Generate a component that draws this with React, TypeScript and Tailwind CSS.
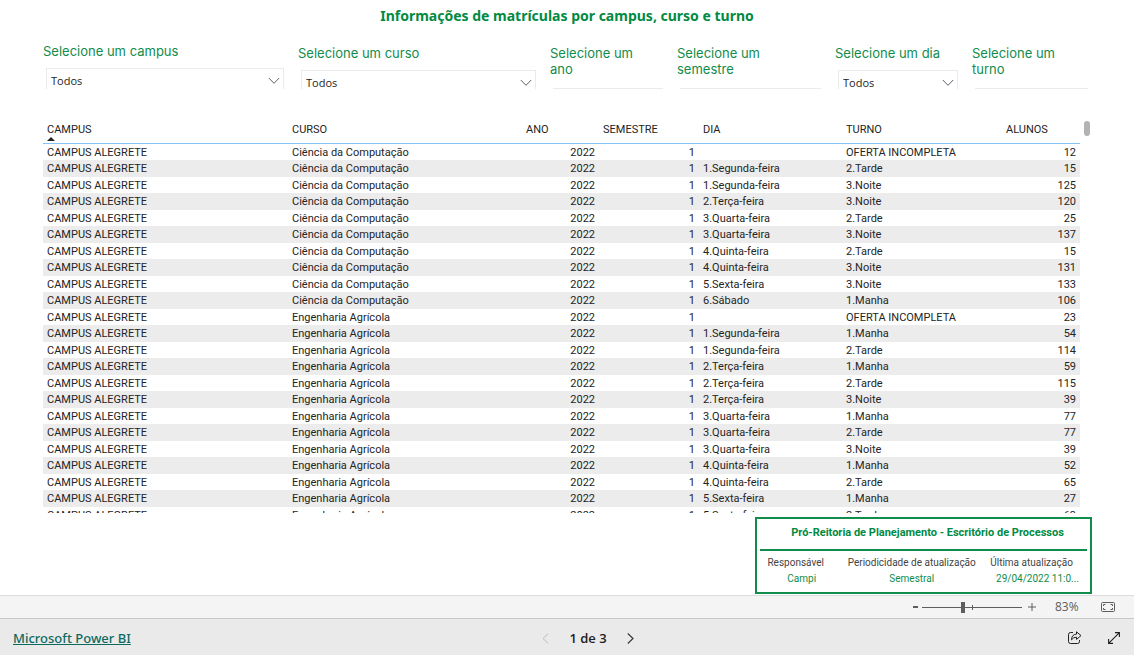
import React from 'react';

interface Slicer {
  id: string;
  label: string;
  raised?: boolean;
  collapsed?: boolean;
}

const slicers: Slicer[] = [
  { id: 'campus', label: 'Selecione um campus', raised: true },
  { id: 'curso', label: 'Selecione um curso' },
  { id: 'ano', label: 'Selecione um ano', collapsed: true },
  { id: 'semestre', label: 'Selecione um semestre', collapsed: true },
  { id: 'dia', label: 'Selecione um dia' },
  { id: 'turno', label: 'Selecione um turno', collapsed: true },
];

const CC = 'Ciência da Computação';
const EA = 'Engenharia Agrícola';

// curso, dia, turno, alunos
const rows: [string, string, string, number][] = [
  [CC, '', 'OFERTA INCOMPLETA', 12],
  [CC, '1.Segunda-feira', '2.Tarde', 15],
  [CC, '1.Segunda-feira', '3.Noite', 125],
  [CC, '2.Terça-feira', '3.Noite', 120],
  [CC, '3.Quarta-feira', '2.Tarde', 25],
  [CC, '3.Quarta-feira', '3.Noite', 137],
  [CC, '4.Quinta-feira', '2.Tarde', 15],
  [CC, '4.Quinta-feira', '3.Noite', 131],
  [CC, '5.Sexta-feira', '3.Noite', 133],
  [CC, '6.Sábado', '1.Manha', 106],
  [EA, '', 'OFERTA INCOMPLETA', 23],
  [EA, '1.Segunda-feira', '1.Manha', 54],
  [EA, '1.Segunda-feira', '2.Tarde', 114],
  [EA, '2.Terça-feira', '1.Manha', 59],
  [EA, '2.Terça-feira', '2.Tarde', 115],
  [EA, '2.Terça-feira', '3.Noite', 39],
  [EA, '3.Quarta-feira', '1.Manha', 77],
  [EA, '3.Quarta-feira', '2.Tarde', 77],
  [EA, '3.Quarta-feira', '3.Noite', 39],
  [EA, '4.Quinta-feira', '1.Manha', 52],
  [EA, '4.Quinta-feira', '2.Tarde', 65],
  [EA, '5.Sexta-feira', '1.Manha', 27],
  [EA, '5.Sexta-feira', '2.Tarde', 63],
];

function SlicerField({ slicer }: { slicer: Slicer }) {
  return (
    <div className={slicer.raised ? 'pr-[14px]' : 'pt-[2px] pr-[14px]'}>
      <label
        htmlFor={slicer.id}
        className={
          slicer.collapsed
            ? "block max-w-[100px] font-['Inter',sans-serif] text-[13px] leading-4 text-[#118c4b]"
            : "block whitespace-nowrap font-['Inter',sans-serif] text-[13px] leading-4 text-[#118c4b]"
        }
      >
        {slicer.label}
      </label>
      <div className={slicer.collapsed ? 'relative ml-[3px] mt-[11px]' : 'relative ml-[3px] mt-[9px]'}>
        <select
          id={slicer.id}
          className="block h-[26px] w-full appearance-none border border-[#ebebeb] bg-white pl-1 text-[11px] text-[#252423] outline-none"
        >
          <option>Todos</option>
        </select>
        <svg
          className="pointer-events-none absolute right-1 top-[9px] h-2 w-3"
          viewBox="0 0 12 8"
          fill="none"
          stroke="#605e6c"
        >
          <path d="M0.8 1 L6 6.3 L11.2 1" />
        </svg>
      </div>
    </div>
  );
}

function EnrollmentTable() {
  return (
    <table className="w-full table-fixed border-collapse text-left font-['Roboto','Noto_Sans',sans-serif] text-[11px] leading-[14px] text-[#252423]">
      <colgroup>
        <col className="w-[245px]" />
        <col className="w-[234px]" />
        <col className="w-[77px]" />
        <col className="w-[100px]" />
        <col className="w-[143px]" />
        <col className="w-[160px]" />
        <col className="w-[78px]" />
      </colgroup>
      <thead>
        <tr className="h-[22px] border-b border-[#83c3f7] align-top *:px-1 *:pb-0 *:pt-[2px] *:font-normal">
          <th>
            CAMPUS
            <svg className="block h-1 w-2" viewBox="0 0 8 4" fill="#252423">
              <path d="M0 4 L4 0 L8 4 Z" />
            </svg>
          </th>
          <th>CURSO</th>
          <th>ANO</th>
          <th>SEMESTRE</th>
          <th>DIA</th>
          <th>TURNO</th>
          <th>ALUNOS</th>
        </tr>
      </thead>
      <tbody>
        {rows.map(([curso, dia, turno, alunos], i) => (
          <tr
            key={i}
            className="h-4 align-top *:px-1 *:pb-0 *:pt-[2px] even:h-[17px] even:bg-[#ececec]"
          >
            <td>CAMPUS ALEGRETE</td>
            <td>{curso}</td>
            <td className="text-right">2022</td>
            <td className="text-right">1</td>
            <td>{dia}</td>
            <td>{turno}</td>
            <td className="text-right">{alunos}</td>
          </tr>
        ))}
      </tbody>
    </table>
  );
}

function InfoCard() {
  return (
    <section className="mb-px mr-[42px] mt-1 h-[77px] w-[337px] shrink-0 self-end border-2 border-[#118c4b] px-[3px] font-['Roboto','Noto_Sans',sans-serif]">
      <h2 className="border-b-2 border-[#118c4b] pb-2 pl-2 pt-[6px] text-center text-[11px] font-bold leading-4 text-[#018a43]">
        Pró-Reitoria de Planejamento - Escritório de Processos
      </h2>
      <dl className="grid grid-cols-[72fr_154fr_93fr] whitespace-nowrap pr-2 pt-1 text-center text-[10px] leading-4 text-[#444]">
        <div>
          <dt>Responsável</dt>
          <dd className="pl-3 text-[#118c4b]">Campi</dd>
        </div>
        <div className="pl-2">
          <dt>Periodicidade de atualização</dt>
          <dd className="text-[#118c4b]">Semestral</dd>
        </div>
        <div>
          <dt>Última atualização</dt>
          <dd className="pl-3 text-[#118c4b]">29/04/2022 11:0...</dd>
        </div>
      </dl>
    </section>
  );
}

function ZoomBar() {
  return (
    <div className="flex h-[23px] shrink-0 items-center justify-end border-t border-[#dcdcdc] bg-[#f4f4f4] pr-[19px] text-[#605e5c]">
      <button aria-label="Reduzir" className="flex h-4 w-[9px] items-center">
        <span className="h-[2px] w-[5px] bg-[#605e5c]" />
      </button>
      <div className="relative flex h-4 w-[100px] items-center">
        <input
          type="range"
          aria-label="Zoom"
          min={0}
          max={100}
          defaultValue={41}
          className="h-px w-full appearance-none bg-[#605e5c] outline-none [&::-webkit-slider-thumb]:h-[11px] [&::-webkit-slider-thumb]:w-1 [&::-webkit-slider-thumb]:appearance-none [&::-webkit-slider-thumb]:bg-[#605e5c]"
        />
        <span className="absolute left-[50px] top-[6px] h-[5px] w-px bg-[#605e5c]" />
      </div>
      <button aria-label="Ampliar" className="ml-[6px] flex h-4 w-2 items-center">
        <svg className="h-2 w-2" viewBox="0 0 8 8" stroke="#605e5c" fill="none">
          <path d="M4 0 V8 M0 4 H8" />
        </svg>
      </button>
      <span className="ml-[19px] w-[26px] text-[12px] leading-4">83%</span>
      <button aria-label="Ajustar à página" className="ml-5">
        <svg className="block h-[10px] w-[14px]" viewBox="0 0 14 10" fill="none" stroke="#605e5c">
          <rect x="0.5" y="0.5" width="13" height="9" rx="1" />
          <path d="M4.5 2.5 H2.5 V4 M2.5 6 V7.5 H4.5 M9.5 2.5 H11.5 V4 M11.5 6 V7.5 H9.5" />
        </svg>
      </button>
    </div>
  );
}

function Footer() {
  return (
    <footer className="grid h-[37px] shrink-0 grid-cols-[1fr_auto_1fr] items-center border-t border-[#c8c8c8] bg-[#eaeaea] pl-[13px] pr-[14px] pt-[2px]">
      <a href="#" className="justify-self-start font-['Noto_Sans',sans-serif] text-[13px] font-medium leading-5 text-[#0d6a5f] underline">
        Microsoft Power BI
      </a>
      <nav className="flex items-center gap-5 pl-[43px]">
        <button aria-label="Página anterior">
          <svg className="block h-[11px] w-[7px]" viewBox="0 0 7 11" fill="none" stroke="#bdbbb9">
            <path d="M6.2 0.5 L1 5.5 L6.2 10.5" />
          </svg>
        </button>
        <span className="text-[13px] font-semibold leading-5 text-[#212121]">1 de 3</span>
        <button aria-label="Próxima página">
          <svg className="block h-[11px] w-[7px]" viewBox="0 0 7 11" fill="none" stroke="#3b3a39" strokeWidth="1.2">
            <path d="M0.8 0.5 L6 5.5 L0.8 10.5" />
          </svg>
        </button>
      </nav>
      <div className="flex items-center gap-[26px] justify-self-end">
        <button aria-label="Compartilhar">
          <svg className="block h-[14px] w-[14px]" viewBox="0 0 14 14" fill="none" stroke="#212121" strokeLinejoin="round">
            <path d="M5 1.5 H2.5 Q0.5 1.5 0.5 3.5 V10.5 Q0.5 12.5 2.5 12.5 H9.5 Q11.5 12.5 11.5 10.5 V9" />
            <path d="M8.5 0.8 L13 4.6 L8.5 8.4 V6.2 Q5.5 6 3.5 8.8 Q3.7 3.4 8.5 3.1 Z" />
          </svg>
        </button>
        <button aria-label="Tela cheia">
          <svg className="block h-3 w-3" viewBox="0 0 12 12" fill="none" stroke="#212121" strokeWidth="1.1">
            <path d="M0.8 11.2 L11.2 0.8 M7 0.6 H11.4 V5 M0.6 7 V11.4 H5" />
          </svg>
        </button>
      </div>
    </footer>
  );
}

export default function App() {
  return (
    <div className="flex h-screen flex-col bg-white font-['Open_Sans','Noto_Sans',sans-serif]">
      <main className="flex min-h-0 flex-1 flex-col">
        <h1 className="pt-[6px] text-center font-['Noto_Sans',sans-serif] text-[14px] font-bold leading-5 text-[#018a43]">
          Informações de matrículas por campus, curso e turno
        </h1>

        <div className="ml-[43px] mr-[32px] mt-[17px] grid h-[46px] shrink-0 grid-cols-[255fr_252fr_127fr_158fr_137fr_130fr] overflow-hidden">
          {slicers.map((slicer) => (
            <SlicerField key={slicer.id} slicer={slicer} />
          ))}
        </div>

        <div className="mt-8 flex min-h-0 flex-1 pl-[43px] pr-[44px]">
          <div className="min-w-0 flex-1 overflow-hidden">
            <EnrollmentTable />
          </div>
          <div className="ml-1 h-[15px] w-[6px] rounded-full bg-[#b3b3b3]" />
        </div>

        <InfoCard />
      </main>
      <ZoomBar />
      <Footer />
    </div>
  );
}
